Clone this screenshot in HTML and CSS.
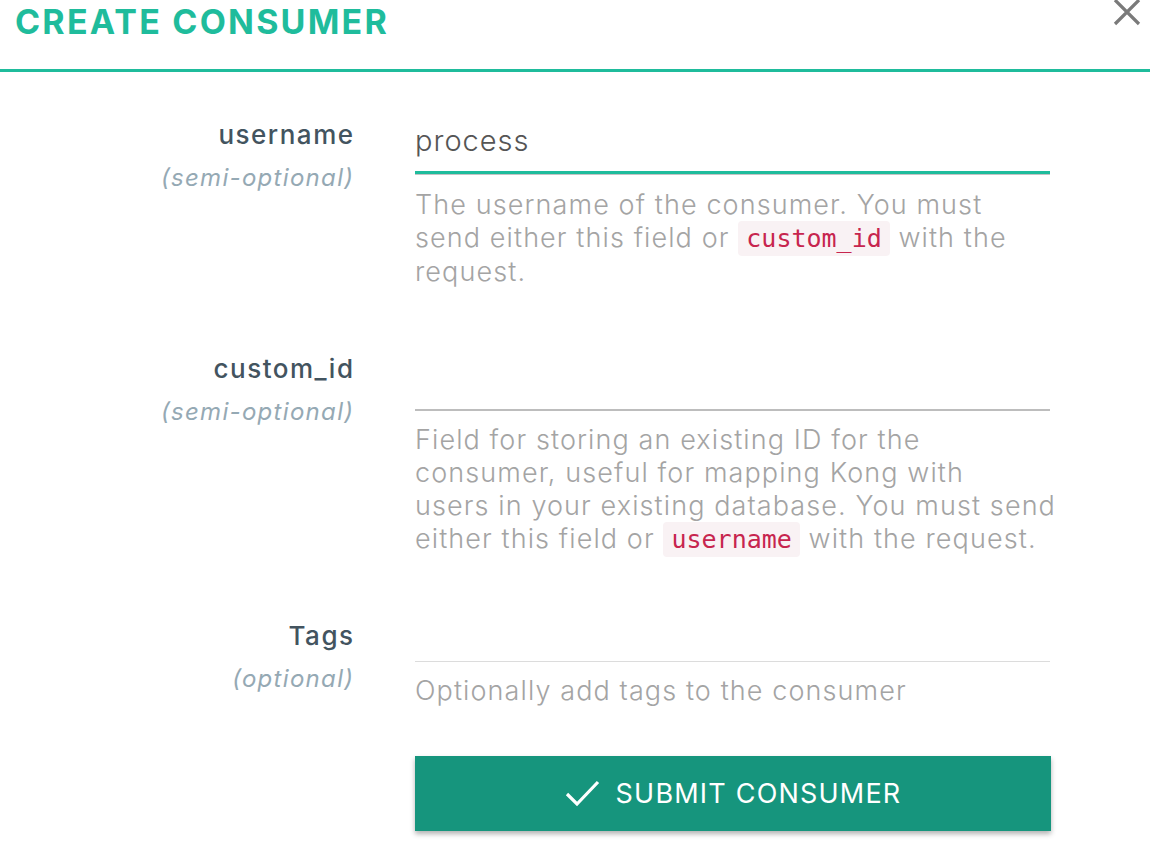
FILE: index.html
```html
<!DOCTYPE html>
<html>
<head>
<meta charset="utf-8">
<link rel="stylesheet" href="styles.css">
</head>
<body>
<div class="modal">
  <header class="modal-header">
    <h1 class="title">CREATE CONSUMER</h1>
    <svg class="close" width="28" height="28" viewBox="0 0 28 28"><path d="M2 2 L26 26 M26 2 L2 26" stroke="#7a7a7a" stroke-width="3.2" fill="none"/></svg>
  </header>
  <form class="form">
    <div class="row row-1">
      <div class="label-cell">
        <div class="label">username</div>
        <div class="hint">(semi-optional)</div>
      </div>
      <div class="field-cell">
        <div class="input-wrap focused"><div class="input">process</div></div>
        <p class="help">The username of the consumer. You must<br>send either this field or <code>custom_id</code> with the<br>request.</p>
      </div>
    </div>
    <div class="row row-2">
      <div class="label-cell">
        <div class="label">custom_id</div>
        <div class="hint">(semi-optional)</div>
      </div>
      <div class="field-cell">
        <div class="input-wrap plain"><div class="input"></div></div>
        <p class="help">Field for storing an existing ID for the<br>consumer, useful for mapping Kong with<br>users in your existing database. You must send<br>either this field or <code>username</code> with the request.</p>
      </div>
    </div>
    <div class="row row-3">
      <div class="label-cell">
        <div class="label">Tags</div>
        <div class="hint">(optional)</div>
      </div>
      <div class="field-cell">
        <div class="input-wrap tags"><div class="input"></div></div>
        <p class="help">Optionally add tags to the consumer</p>
      </div>
    </div>
    <div class="row row-btn">
      <div class="label-cell"></div>
      <div class="field-cell">
        <button type="button" class="submit">
          <svg class="check" width="36" height="28" viewBox="0 0 36 28"><path d="M2 15 L12 25 L33 3" stroke="#fff" stroke-width="3.2" fill="none"/></svg>
          <span>SUBMIT CONSUMER</span>
        </button>
      </div>
    </div>
  </form>
</div>
</body>
</html>
```

FILE: styles.css
```css
html, body {
  margin: 0;
  padding: 0;
  background: #fff;
}
body {
  font-family: Inter, Lato, sans-serif;
  width: 1150px;
  height: 868px;
  overflow: hidden;
}
.modal-header {
  position: relative;
  height: 69px;
  border-bottom: 3px solid #1fbc9c;
  padding-left: 15px;
  box-sizing: content-box;
}
.title {
  margin: 0;
  padding-top: 2px;
  font-size: 34px;
  line-height: 40px;
  font-weight: 700;
  color: #1fbc9c;
  letter-spacing: 2.2px;
}
.close {
  position: absolute;
  right: 9px;
  top: -2px;
}
.form {
  padding-top: 38px;
}
.row {
  display: grid;
  grid-template-columns: 353px 635px;
  column-gap: 62px;
}
.label-cell {
  text-align: right;
}
.label {
  font-size: 26px;
  line-height: 30px;
  color: #43545f;
  font-weight: 450;
  letter-spacing: 1.5px;
  margin-right: -1.5px;
}
.hint {
  margin-top: 13px;
  font-size: 24px;
  line-height: 30px;
  font-style: italic;
  color: #95a9b4;
  font-weight: 400;
  letter-spacing: 1.3px;
  margin-right: -1.3px;
}
.input-wrap {
  box-sizing: border-box;
}
.input {
  font-size: 29px;
  color: #555;
  font-weight: 300;
  letter-spacing: 1px;
}
.row-1 .label-cell { padding-top: 10px; }
.row-1 .input-wrap {
  border-bottom: 1px solid #c4c4c4;
}
.row-1 .input {
  height: 61px;
  line-height: 62px;
  border-bottom: 3px solid #1fbc9c;
}
.row-2 { margin-top: 58px; }
.row-2 .label-cell { padding-top: 8px; }
.row-2 .input {
  height: 63px;
  border-bottom: 2px solid #bdbdbd;
}
.row-3 { margin-top: 59px; }
.row-3 .label-cell { padding-top: 6px; }
.row-3 .input {
  height: 46px;
  border-bottom: 1px solid #dcdcdc;
}
.help {
  margin: 13px 0 0;
  font-size: 27px;
  line-height: 33px;
  color: #a4a4a4;
  font-weight: 300;
  letter-spacing: 1.1px;
  white-space: nowrap;
}
.row-2 .help { margin-top: 12px; }
.row-3 .help { margin-top: 12px; }
code {
  font-family: "DejaVu Sans Mono", monospace;
  font-size: 25px;
  letter-spacing: 0;
  color: #c7254e;
  background: #f9f2f4;
  border-radius: 4px;
  padding: 3px 8px;
}
.row-btn { margin-top: 49px; }
.submit {
  width: 636px;
  height: 75px;
  border: none;
  background: #16957d;
  color: #fff;
  display: flex;
  align-items: center;
  justify-content: center;
  gap: 15px;
  font-family: Inter, Lato, sans-serif;
  font-size: 27px;
  font-weight: 400;
  letter-spacing: 1.2px;
  box-shadow: 0 3px 5px rgba(0,0,0,0.3);
  padding: 0;
}
.check {
  margin-top: -2px;
}
```
